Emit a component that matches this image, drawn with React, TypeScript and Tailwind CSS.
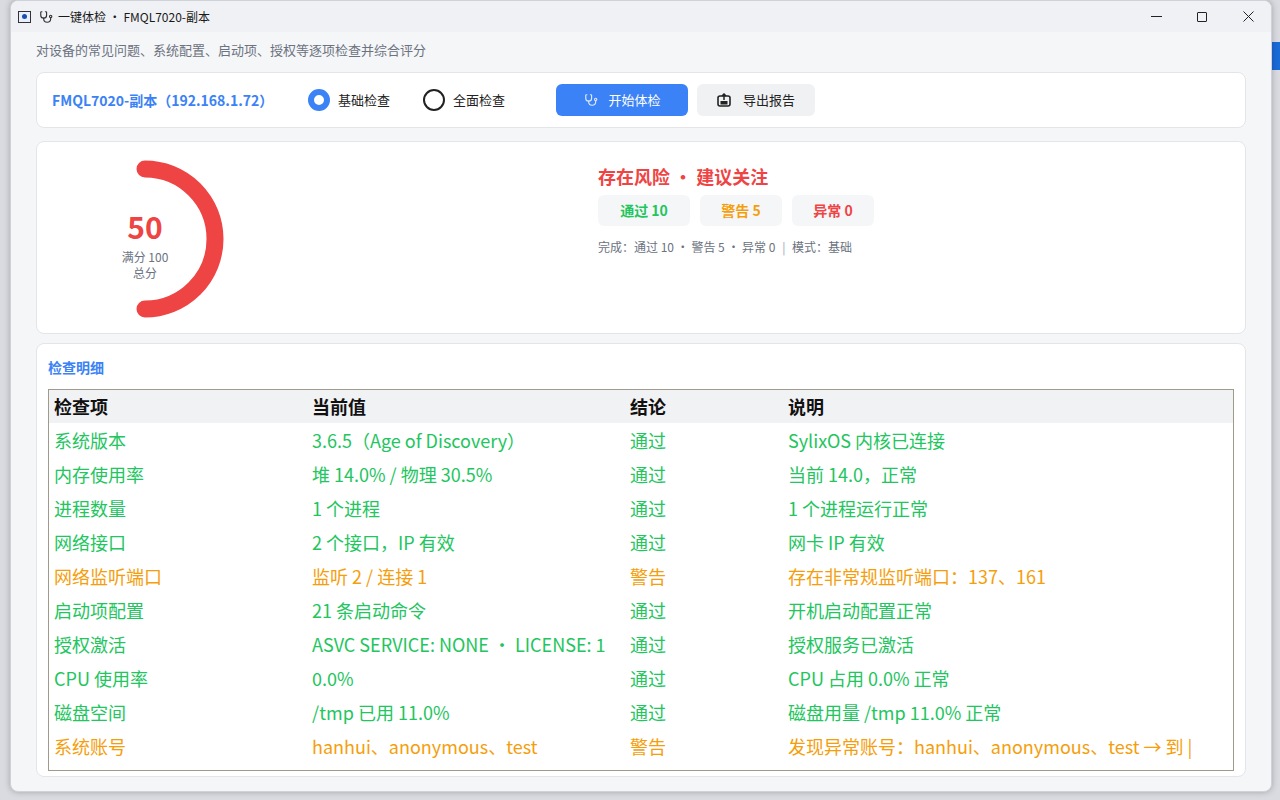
import React from "react";

const rows: [string, string, string, string, boolean][] = [
  ["系统版本", "3.6.5（Age of Discovery）", "通过", "SylixOS 内核已连接", true],
  ["内存使用率", "堆 14.0% / 物理 30.5%", "通过", "当前 14.0，正常", true],
  ["进程数量", "1 个进程", "通过", "1 个进程运行正常", true],
  ["网络接口", "2 个接口，IP 有效", "通过", "网卡 IP 有效", true],
  ["网络监听端口", "监听 2 / 连接 1", "警告", "存在非常规监听端口：137、161", false],
  ["启动项配置", "21 条启动命令", "通过", "开机启动配置正常", true],
  ["授权激活", "ASVC SERVICE: NONE · LICENSE: 1", "通过", "授权服务已激活", true],
  ["CPU 使用率", "0.0%", "通过", "CPU 占用 0.0% 正常", true],
  ["磁盘空间", "/tmp 已用 11.0%", "通过", "磁盘用量 /tmp 11.0% 正常", true],
  ["系统账号", "hanhui、anonymous、test", "警告", "发现异常账号：hanhui、anonymous、test → 到 |", false],
];

function Steth({ c = "currentColor" }: { c?: string }) {
  return (
    <svg width="14" height="14" viewBox="0 0 24 24" fill="none" stroke={c} strokeWidth="2" strokeLinecap="round" strokeLinejoin="round">
      <path d="M5 3H4a1 1 0 0 0-1 1v5a5 5 0 0 0 10 0V4a1 1 0 0 0-1-1h-1" />
      <path d="M8 14v1a6 6 0 0 0 12 0v-2" />
      <circle cx="20" cy="11" r="2" />
    </svg>
  );
}

export default function App() {
  return (
    <div className="w-[1280px] h-[800px] bg-[#d9dbe0] relative overflow-hidden" style={{ fontFamily: '"Noto Sans CJK SC", "Noto Sans", sans-serif' }}>
      <div className="absolute right-0 top-[42px] w-[10px] h-[28px] bg-[#1a6ad8]" />
      <div className="absolute left-[10px] top-0 w-[1262px] h-[792px] bg-[#f5f6f8] rounded-lg shadow-[0_0_6px_rgba(0,0,0,0.25)] flex flex-col overflow-hidden border border-[#cfd2d8]">
        <div className="h-[31px] bg-[#eff1f4] flex items-center shrink-0">
          <div className="w-[13px] h-[12px] ml-[7px] border border-[#333] bg-[#e8f0ff] flex items-center justify-center">
            <div className="w-[5px] h-[5px] rounded-full bg-[#1a4fb0]" />
          </div>
          <span className="ml-[8px] text-[#333]"><Steth /></span>
          <span className="ml-[5px] text-[12px] text-[#1a1a1a]">一键体检 · FMQL7020-副本</span>
          <div className="ml-auto flex items-center text-[#222]">
            <div className="w-[46px] flex justify-center"><div className="w-[11px] h-px bg-[#222]" /></div>
            <div className="w-[46px] flex justify-center"><div className="w-[10px] h-[10px] border border-[#222] rounded-[1px]" /></div>
            <div className="w-[46px] flex justify-center">
              <svg width="11" height="11" viewBox="0 0 11 11" stroke="#222" strokeWidth="1"><path d="M0.5 0.5l10 10M10.5 0.5l-10 10" /></svg>
            </div>
          </div>
        </div>
        <div className="px-[25px] flex flex-col flex-1">
          <div className="h-[34px] flex items-center text-[13px] text-[#6b7280] pt-[1px]">对设备的常见问题、系统配置、启动项、授权等逐项检查并综合评分</div>
          <div className="mt-[6px] h-[56px] bg-white rounded-lg border border-[#e3e5e9] flex items-center px-[15px]">
            <span className="text-[14px] font-bold text-[#3b82f6] w-[256px]">FMQL7020-副本（192.168.1.72）</span>
            <span className="w-[22px] h-[22px] rounded-full border-[6px] border-[#3b82f6] bg-white" />
            <span className="ml-[8px] text-[13px] text-[#222]">基础检查</span>
            <span className="ml-[33px] w-[22px] h-[22px] rounded-full border-[2px] border-[#222] bg-white" />
            <span className="ml-[8px] text-[13px] text-[#222]">全面检查</span>
            <button className="ml-[51px] w-[132px] h-[32px] rounded-md bg-[#3b82f6] text-white text-[13px] flex items-center justify-center gap-[11px]">
              <Steth c="#dbe7ff" />开始体检
            </button>
            <button className="ml-[9px] w-[118px] h-[32px] rounded-md bg-[#f0f1f3] text-[#222] text-[13px] flex items-center justify-center gap-[12px]">
              <svg width="14" height="14" viewBox="0 0 14 14"><rect x="1" y="3" width="12" height="10" rx="2" fill="none" stroke="#222" strokeWidth="1.6" /><rect x="3.5" y="8" width="7" height="3.5" fill="#222" /><path d="M7 1v6M5 3l2-2 2 2" stroke="#222" strokeWidth="1.5" fill="none" /></svg>
              导出报告
            </button>
          </div>
          <div className="mt-[13px] h-[193px] bg-white rounded-lg border border-[#e3e5e9] flex">
            <div className="w-[220px] relative">
              <svg className="absolute left-0 top-0" width="220" height="193" viewBox="0 0 220 193">
                <path d="M108 27 A70 70 0 0 1 108 167" fill="none" stroke="#ef4444" strokeWidth="17" strokeLinecap="round" />
              </svg>
              <div className="absolute left-[58px] w-[100px] top-[66px] flex flex-col items-center">
                <span className="text-[30px] font-bold text-[#ef4444] leading-[36px]">50</span>
                <span className="mt-[5px] text-[12px] text-[#6b7280] leading-[16px]">满分 100</span>
                <span className="text-[12px] text-[#6b7280] leading-[16px]">总分</span>
              </div>
            </div>
            <div className="ml-[341px] pt-[20px] flex flex-col">
              <div className="text-[18px] font-bold text-[#ef4444] leading-[28px]">存在风险 • 建议关注</div>
              <div className="mt-[5px] flex gap-[10px] text-[14px] font-bold">
                <span className="w-[92px] h-[31px] rounded-md bg-[#f5f6f8] flex items-center justify-center text-[#22c55e]">通过 10</span>
                <span className="w-[82px] h-[31px] rounded-md bg-[#f5f6f8] flex items-center justify-center text-[#f59e0b]">警告 5</span>
                <span className="w-[82px] h-[31px] rounded-md bg-[#f5f6f8] flex items-center justify-center text-[#ef4444]">异常 0</span>
              </div>
              <div className="mt-[12px] text-[12px] text-[#6b7280]">完成：通过 10 · 警告 5 · 异常 0 <span className="mx-[4px] text-[#9aa3b5]">|</span> 模式：基础</div>
            </div>
          </div>
          <div className="mt-[9px] h-[434px] bg-white rounded-lg border border-[#e3e5e9] px-[11px] pt-[13px]">
            <div className="text-[14px] font-bold text-[#3b82f6] leading-[20px]">检查明细</div>
            <div className="mt-[12px] h-[382px] border border-[#a09a8c] overflow-hidden">
              <div className="h-[33px] bg-[#f1f2f4] flex items-center text-[18px] font-bold text-[#111]">
                <span className="w-[258px] pl-[5px]">检查项</span>
                <span className="w-[318px] pl-[5px]">当前值</span>
                <span className="w-[158px] pl-[5px]">结论</span>
                <span className="pl-[5px]">说明</span>
              </div>
              {rows.map((r, i) => (
                <div key={i} className={`h-[34px] flex items-center text-[18px] whitespace-nowrap ${r[4] ? "text-[#22c55e]" : "text-[#f59e0b]"}`}>
                  <span className="w-[258px] pl-[5px]">{r[0]}</span>
                  <span className="w-[318px] pl-[5px] overflow-hidden">{r[1]}</span>
                  <span className="w-[158px] pl-[5px]">{r[2]}</span>
                  <span className="pl-[5px]">{r[3]}</span>
                </div>
              ))}
            </div>
          </div>
        </div>
      </div>
    </div>
  );
}
